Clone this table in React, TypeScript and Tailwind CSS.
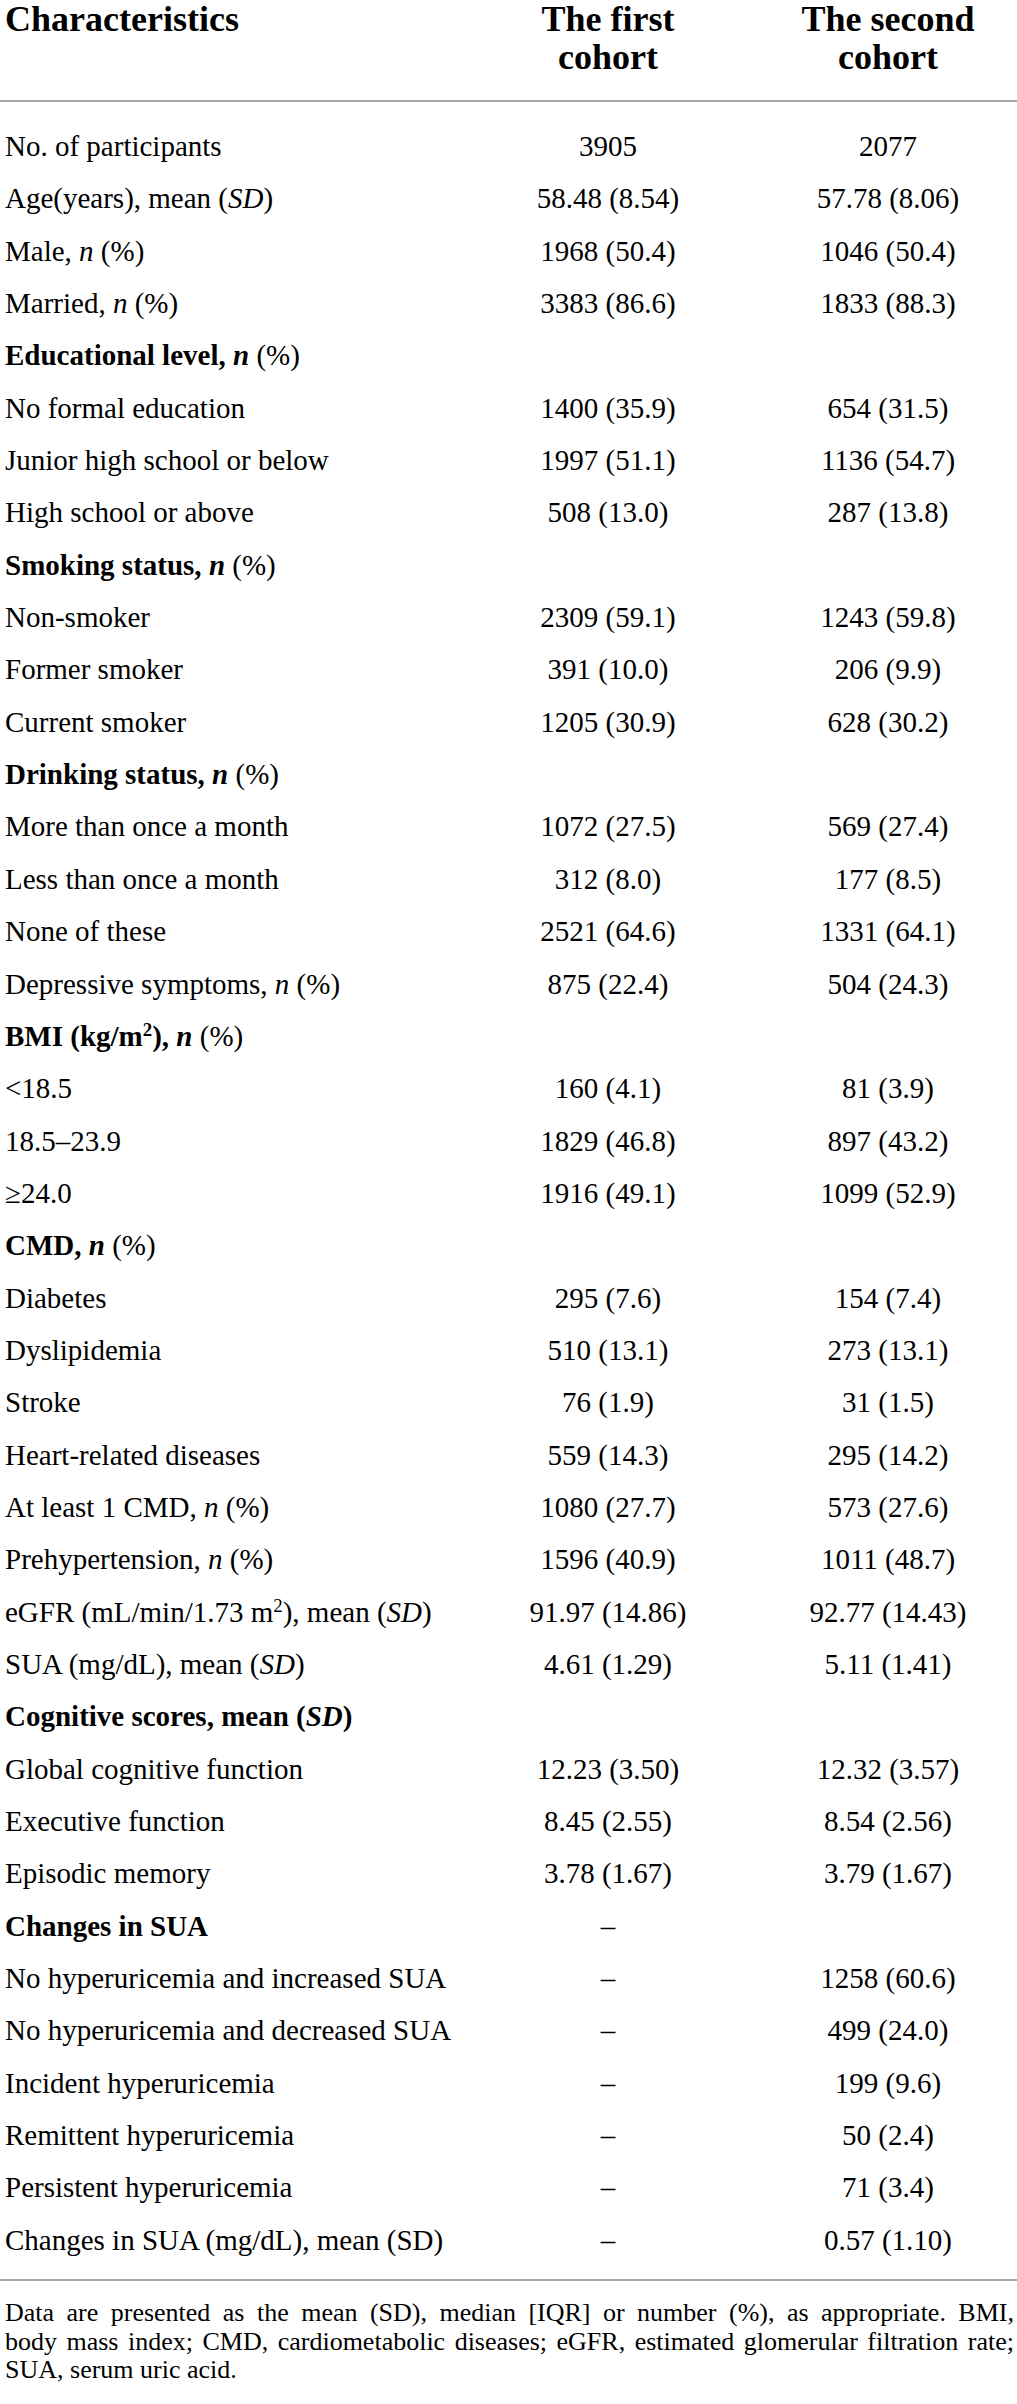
import React from "react";

type Row = { label: React.ReactNode; bold?: boolean; a?: string; b?: string };

const I = ({ children }: { children: React.ReactNode }) => <i>{children}</i>;
const N = () => <i>n</i>;
const Pct = () => <span className="font-normal">(%)</span>;

const rows: Row[] = [
  { label: "No. of participants", a: "3905", b: "2077" },
  { label: <>Age(years), mean (<I>SD</I>)</>, a: "58.48 (8.54)", b: "57.78 (8.06)" },
  { label: <>Male, <N /> (%)</>, a: "1968 (50.4)", b: "1046 (50.4)" },
  { label: <>Married, <N /> (%)</>, a: "3383 (86.6)", b: "1833 (88.3)" },
  { label: <>Educational level, <N /> <Pct /></>, bold: true },
  { label: "No formal education", a: "1400 (35.9)", b: "654 (31.5)" },
  { label: "Junior high school or below", a: "1997 (51.1)", b: "1136 (54.7)" },
  { label: "High school or above", a: "508 (13.0)", b: "287 (13.8)" },
  { label: <>Smoking status, <N /> <Pct /></>, bold: true },
  { label: "Non-smoker", a: "2309 (59.1)", b: "1243 (59.8)" },
  { label: "Former smoker", a: "391 (10.0)", b: "206 (9.9)" },
  { label: "Current smoker", a: "1205 (30.9)", b: "628 (30.2)" },
  { label: <>Drinking status, <N /> <Pct /></>, bold: true },
  { label: "More than once a month", a: "1072 (27.5)", b: "569 (27.4)" },
  { label: "Less than once a month", a: "312 (8.0)", b: "177 (8.5)" },
  { label: "None of these", a: "2521 (64.6)", b: "1331 (64.1)" },
  { label: <>Depressive symptoms, <N /> (%)</>, a: "875 (22.4)", b: "504 (24.3)" },
  {
    label: (
      <>
        BMI (kg/m<sup className="text-[0.65em]">2</sup>), <N /> <Pct />
      </>
    ),
    bold: true,
  },
  { label: "<18.5", a: "160 (4.1)", b: "81 (3.9)" },
  { label: "18.5–23.9", a: "1829 (46.8)", b: "897 (43.2)" },
  { label: "≥24.0", a: "1916 (49.1)", b: "1099 (52.9)" },
  { label: <>CMD, <N /> <Pct /></>, bold: true },
  { label: "Diabetes", a: "295 (7.6)", b: "154 (7.4)" },
  { label: "Dyslipidemia", a: "510 (13.1)", b: "273 (13.1)" },
  { label: "Stroke", a: "76 (1.9)", b: "31 (1.5)" },
  { label: "Heart-related diseases", a: "559 (14.3)", b: "295 (14.2)" },
  { label: <>At least 1 CMD, <N /> (%)</>, a: "1080 (27.7)", b: "573 (27.6)" },
  { label: <>Prehypertension, <N /> (%)</>, a: "1596 (40.9)", b: "1011 (48.7)" },
  {
    label: (
      <>
        eGFR (mL/min/1.73 m<sup className="text-[0.65em]">2</sup>), mean (<I>SD</I>)
      </>
    ),
    a: "91.97 (14.86)",
    b: "92.77 (14.43)",
  },
  { label: <>SUA (mg/dL), mean (<I>SD</I>)</>, a: "4.61 (1.29)", b: "5.11 (1.41)" },
  { label: <>Cognitive scores, mean (<I>SD</I>)</>, bold: true },
  { label: "Global cognitive function", a: "12.23 (3.50)", b: "12.32 (3.57)" },
  { label: "Executive function", a: "8.45 (2.55)", b: "8.54 (2.56)" },
  { label: "Episodic memory", a: "3.78 (1.67)", b: "3.79 (1.67)" },
  { label: "Changes in SUA", bold: true, a: "–" },
  { label: "No hyperuricemia and increased SUA", a: "–", b: "1258 (60.6)" },
  { label: "No hyperuricemia and decreased SUA", a: "–", b: "499 (24.0)" },
  { label: "Incident hyperuricemia", a: "–", b: "199 (9.6)" },
  { label: "Remittent hyperuricemia", a: "–", b: "50 (2.4)" },
  { label: "Persistent hyperuricemia", a: "–", b: "71 (3.4)" },
  { label: "Changes in SUA (mg/dL), mean (SD)", a: "–", b: "0.57 (1.10)" },
];

export default function App() {
  return (
    <div className="w-[1017px] min-h-[2404px] bg-white text-black font-['Liberation_Serif',serif]">
      {/* Header */}
      <div className="grid grid-cols-[457px_302px_258px] h-[102px] border-b-2 border-[#a8a8a8] text-[36px] leading-[38px] font-bold">
        <div className="pl-[5px]">Characteristics</div>
        <div className="text-center">
          The first
          <br />
          cohort
        </div>
        <div className="text-center">
          The second
          <br />
          cohort
        </div>
      </div>

      {/* Body */}
      <div className="pt-[18px] pb-[13px] text-[29px]">
        {rows.map((r, i) => (
          <div
            key={i}
            className="grid grid-cols-[457px_302px_258px] h-[52.35px] leading-[52.35px] whitespace-nowrap"
          >
            <div className={`pl-[5px] ${r.bold ? "font-bold" : ""}`}>{r.label}</div>
            <div className="text-center">{r.a ?? ""}</div>
            <div className="text-center">{r.b ?? ""}</div>
          </div>
        ))}
      </div>

      {/* Footer */}
      <div className="border-t-2 border-[#a8a8a8] pt-[18px] pl-[5px] pr-[3px] text-[26px] leading-[28.5px]">
        <div className="text-justify [text-align-last:justify] whitespace-nowrap">
          Data are presented as the mean (SD), median [IQR] or number (%), as appropriate. BMI,
        </div>
        <div className="text-justify [text-align-last:justify] whitespace-nowrap">
          body mass index; CMD, cardiometabolic diseases; eGFR, estimated glomerular filtration rate;
        </div>
        <div>SUA, serum uric acid.</div>
      </div>
    </div>
  );
}
